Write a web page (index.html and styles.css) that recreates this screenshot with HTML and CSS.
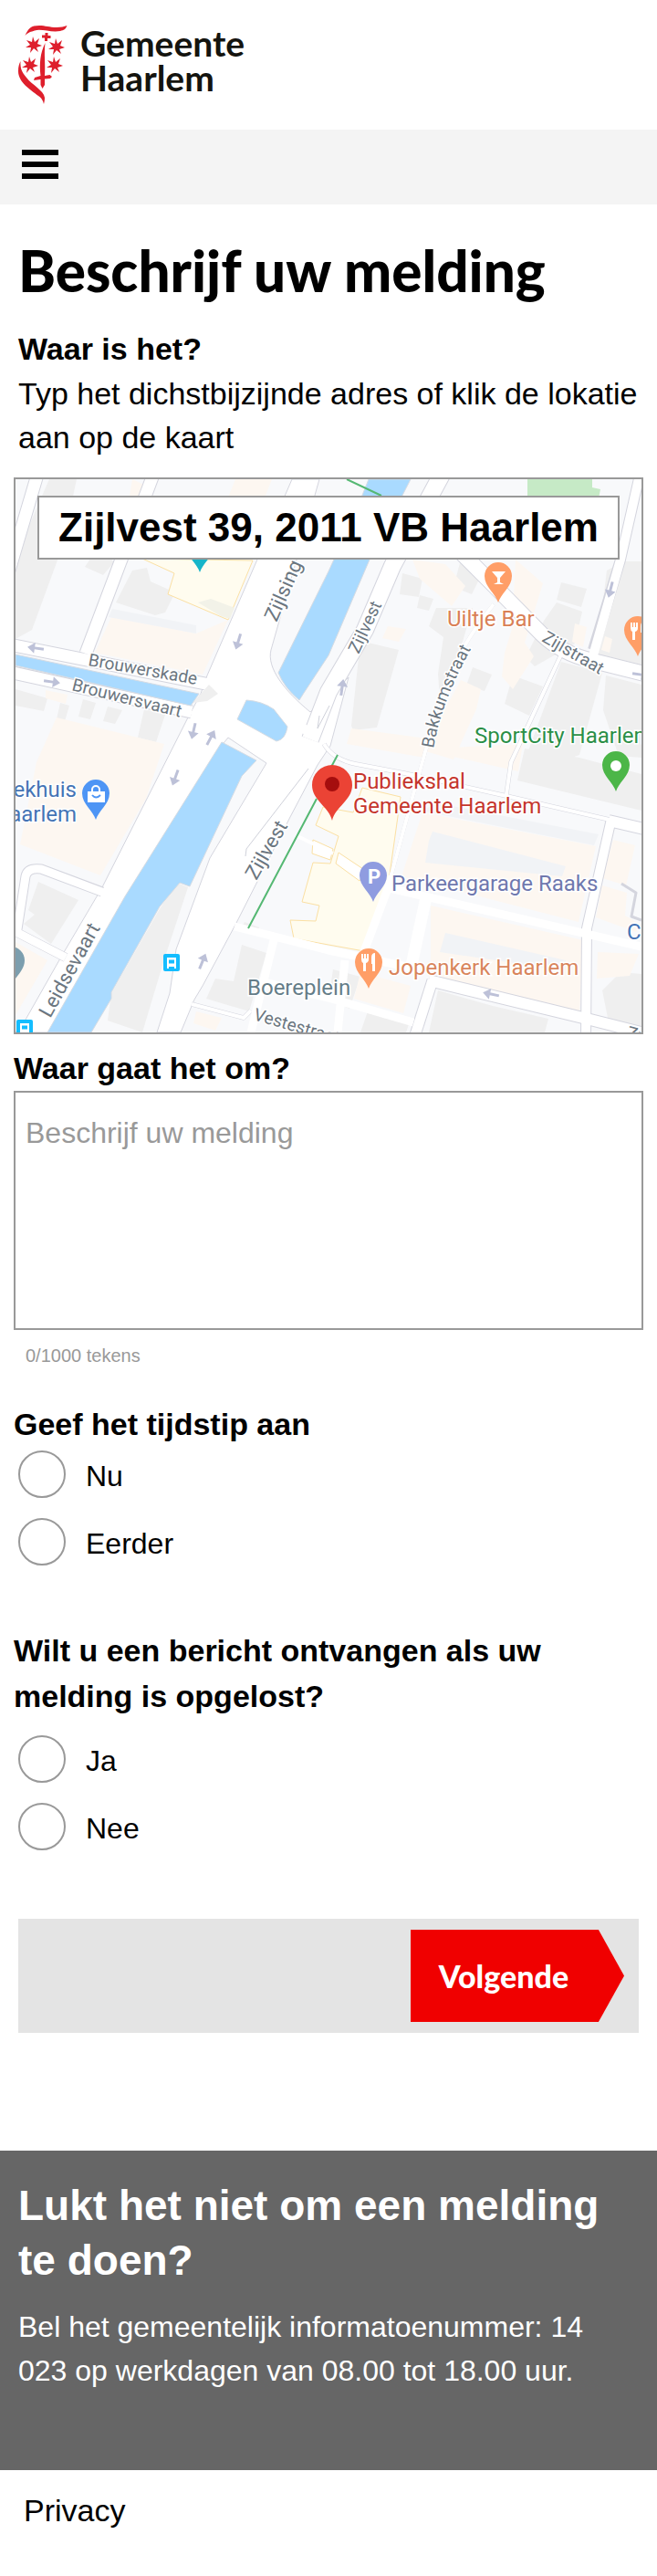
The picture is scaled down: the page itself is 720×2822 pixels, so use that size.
FILE: index.html
```html
<!DOCTYPE html>
<html lang="nl">
<head>
<meta charset="utf-8">
<meta name="viewport" content="width=device-width, initial-scale=1">
<title>Beschrijf uw melding - Gemeente Haarlem</title>
<link rel="stylesheet" href="styles.css">
</head>
<body>
<header class="site-header">
  <a class="logo" href="#">
    <svg class="logo-mark" viewBox="20 28 54 86" aria-hidden="true">
      <defs>
        <path id="star" d="M-1-9 1-3 6-7 4-1 9 1 3 3 5 8 0 4-4 9-3 3-9 3-4 0-8-5-2-3z"/>
      </defs>
      <g fill="#de1f2c">
        <path d="M27.500 39C31 31 34 28 43 28C50 28 54 30 62 30C67 30 70 29 73.500 28C72 32 70 33 66 34C56 36 45 31 38 33.500C34 35 31 35 27.500 39z"/>
        <path d="M22.500 67C22 75 24 79 29 85C35 93 48 99 49 107C49 110 48.500 112 48 114C47 110 46 108 42 105C33 98 20 90 20 78C20 73 21 70 22.500 67z"/>
        <use href="#star" x="37" y="49"/>
        <use href="#star" x="62" y="51"/>
        <use href="#star" x="33" y="71"/>
        <use href="#star" x="60" y="71"/>
        <path d="M49.500 36h3v3h3v3h-3.500v3h-3v-3.500h-3v-3h3.500z"/>
        <path d="M49.500 47C44 58 43 70 44.500 83L38 85 37 88 44.500 87V93L46.500 97 49 93V86.500L55 86 57 84 54.500 82 49 83C50 70 48 60 49.500 47z"/>
      </g>
    </svg>
    <span class="logo-text"><span>Gemeente</span><span>Haarlem</span></span>
  </a>
</header>
<nav class="menu-bar">
  <button class="menu-button" type="button" aria-label="Menu"><span></span><span></span><span></span></button>
</nav>
<main>
  <form class="report">
    <section class="intro">
      <h1>Beschrijf uw melding</h1>
      <h2 class="question"><label for="address">Waar is het?</label></h2>
      <p>Typ het dichstbijzijnde adres of klik de lokatie aan op de kaart</p>
    </section>
    <div class="map">
      <svg class="map-canvas" viewBox="17 525 686 606" role="img" aria-label="Kaart van Haarlem">
        <defs>
          <path id="pin" d="M0 0C-3-10-15-17-15-29A15 15 0 0 1 15-29C15-17 3-10 0 0z"/>
          <path id="arrow" d="M-1.500 9V-1H-6L0-9 6-1H1.500V9z" fill="#bdc1d8"/>
          <g id="fork" fill="#fff"><path d="M-8-9h2v5h1v-5h2v5h1v-5h2v6q0 3-3 4v9h-3v-9q-2-1-2-4z"/><path d="M3-5q0-5 4-5v20h-3v-8h-1z"/></g>
          <g id="bus"><rect x="-9" y="-10" width="18" height="19" rx="2" fill="#14bdff"/><path d="M-5-6h10v12h-2v-2h-6v2h-2z" fill="#fff"/><path d="M-3-3.500h6v4h-6z" fill="#14bdff"/></g>
          <path id="bakkum-line" d="M475 820C481 785 494 750 519 706L535 676"/>
          <g id="streets" fill="none" stroke-linejoin="round">
            <path stroke-width="15" d="M41 520 10 625"/>
            <path stroke-width="15" d="M168 520 94 716"/>
            <path stroke-width="15" d="M10 706 130 730 225 749"/>
            <path stroke-width="15" d="M10 736 210 780"/>
            <path stroke-width="20" d="M484 520 430 620 400 690 360 758 340 810"/>
            <path stroke-width="18" d="M495 595 540 640 593 694 Q615 716 650 724L710 739"/>
            <path stroke-width="12" d="M701 520 680 613 650 712"/>
            <path stroke-width="5" d="M615 717 560 835 555 870"/>
            <path stroke-width="4" d="M541 662 Q485 730 467 820L453 870 427 965"/>
            <path stroke-width="5" d="M355 815 Q365 832 390 837L443 847 555 872 668 898"/>
            <path stroke-width="14" d="M667 899 710 909"/>
            <path stroke-width="12" d="M670 897 643 1017 642 1140"/>
            <path stroke-width="14" d="M470 1074 643 1116 710 1133"/>
            <path stroke-width="13" d="M474 1074 453 1140"/>
            <path stroke-width="10" d="M10 1017 72 1049"/>
            <path stroke-width="11" d="M19 1018 28 960 Q30 950 45 952L112 977"/>
            <path stroke-width="5" d="M210 1100 267 1115 275 1107"/>
            <path stroke-width="3" d="M681 968 697 978 692 1004 703 1008"/>
          </g>
        </defs>
        <rect x="17" y="525" width="686" height="606" fill="#f8f9fb"/>

        <g fill="#efefef">
          <path d="M54 525h30L68 600 35 690 17 700V610z"/>
          <path d="M145 625l16-3 4 15 27 12-11 22-11 3-43-14z"/>
          <path d="M99 612l20-3 6 7-12 14-20-9z"/>
          <path d="M17 755l35 10-4 14-31-6zM66 770l10 3-5 17-9-2zM91 766l14 4-6 18-13-3zM118 774l16 4-8 15-13-3zM158 777l23 6-10 30-20-5z"/>
          <path d="M42 966l44 20-30 48-30-22 12-10-7-5z"/>
          <path d="M206 972l-12-5-18 27-54 94-4 30 38 13 24-80z"/>
          <path d="M441 628l22 6-4 20-21-3zM460 652l15 4-5 13-13-3zM478 666h40l-12 40-24 60-2-28 6-40-16-12z"/>
          <path d="M395 702l42 10-24 85-26 3-2-5z"/>
          <path d="M518 731l21 8-8 18-20-6zM562 740l33 12-15 32-27-13z"/>
          <path d="M505 613l22 18-10 20-20-8zM615 638l28 7-6 20-27-8zM610 660l28 10-8 35-44 25-10-10 20-40z"/>
          <path d="M615 725l45 12-25 90-55 20-9-3zM664 740l39 10v80l-25-2-17-50z"/>
          <path d="M575 820l60 10 68 18v40l-136-33zM665 625l18-10h20v120l-50-12z"/>
          <path d="M265 1035l27 9-19 64-47-14 10-22 20 3z"/>
          <path d="M480 1085l60 17 61 14-4 15H470zM365 1062l30 8-12 35-23-10zM403 1108l45 14-3 9h-50zM660 1085l20-20 23 2v60l-37-12z"/>
          <path d="M268 1010l16 6-2 6-17-6z"/>
        </g>
        <g fill="#fdf7f1">
          <path d="M145 525l21 10-6 12-18-4zM258 525h40l-8 20h-40z"/>
          <path d="M122 676l93 18 35-15-28 60-118-24z"/>
          <path d="M62 786l118 29-20 60-50 84-88-34 18-90z"/>
          <path d="M50 756l24 5-2 10-22-6z"/>
          <path d="M17 1032l35 20-35 60z"/>
          <path d="M452 613l36 5 22 24-15 22-35-30zM565 613l30 26-20 65 10 15-23 36-12-14 3-26 8-26z"/>
          <path d="M505 745l22 10-5 22-25 55-34-10zM385 798l90 12-10 20-85-15zM425 686l20 3-8 14-18-4zM630 683l13 4-4 22-12-6zM663 697l8 3-3 15-9-3z"/>
          <path d="M475 820l98-5-5 30-98-22z"/>
          <path d="M463 890l190 37-19 83-194-50zM472 992l167 38-4 82-163-38z"/>
          <path d="M672 920l24 6-10 44-26-8zM660 970l27 8-2 25 18 10-6 8-44-16zM655 1043l45 2-10 24-36 3zM395 1065l55 15-8 30-54-16z"/>
          <path d="M215 1108l28 7-7 14-24-8z"/>
        </g>
        <g fill="#f1f3f6">
          <path d="M123 667l92 18v9l-96-18zM470 921l4-10 146 38-4 11-150-15zM488 1022l132 30-3 11-135-20zM480 880l176 34-5 12-190-38z"/>
        </g>
        <path d="M578 525h71v9l9 2-2 10h-78z" fill="#c6eac6"/>
        <g fill="#fffcef" stroke="#fbe0a3">
          <path d="M156 612l35 16-7 23 66 28 27-65z"/>
          <path d="M354 884l33 6 10-27 42 10-12 85-28 84-39-7-38-7-4-20 28 1 4-17-19-4 12-43 19 1 9-30-25-12z"/>
          <path d="M371 934l30 20-7 11-26-19zM343 920l22 10-3 12-20-7z" fill="#fff"/>
        </g>
        <path d="M217 660l14-4 26 10-5 12-10-3z" fill="#f2f2e8"/>

        <g fill="#fff" stroke="#d4d5de">
          <path d="M320 525 227 740 220 760 205 788 112 972 66 1050 28 1117 17 1131H55L240 820 250 808 292 836 230 940 193 1040 186 1088 172 1131H198L213 1095 222 1080 258 1013 318 895 348 838 362 817 382 742 340 780C312 757 292 732 297 712L350 525z"/>
        </g>
        <use href="#streets" stroke="#d4d5de"/>
        <g fill="none" stroke="#fff" stroke-linejoin="round">
          <path stroke-width="13" d="M41 520 10 625M168 520 94 716"/>
          <path stroke-width="13" d="M10 706 130 730 235 751M10 736 210 780"/>
          <path stroke-width="18" d="M484 520 430 620 400 690 360 758 340 810"/>
          <path stroke-width="16" d="M495 595 540 640 593 694 Q615 716 650 724L710 739"/>
          <path stroke-width="10" d="M701 520 680 613 650 718"/>
          <path stroke-width="4" d="M615 717 560 835 555 870M541 662 Q485 730 467 820L453 870 427 965M355 815 Q365 832 390 837L443 847 555 872 668 898"/>
          <path stroke-width="12" d="M667 899 710 909M470 1074 643 1116 710 1133"/>
          <path stroke-width="10" d="M670 897 643 1017 642 1140"/>
          <path stroke-width="11" d="M474 1074 453 1140"/>
          <path stroke-width="9" d="M10 1017 72 1049M19 1018 28 960 Q30 950 45 952L114 978"/>
          <path stroke-width="9" d="M427 973 703 1037M430 960 398 1045M257 1015 360 1041 460 1062M300 1030 275 1131M285 1075 360 1093 453 1120M378 1052 370 1131"/>
          <path stroke-width="13" d="M467 983 450 1062"/>
          <path stroke-width="4" d="M210 1100 267 1115 275 1107M324 915 365 935"/>
          <path stroke-width="10" d="M212 785 245 750 345 805"/>
        </g>
        <path d="M338 842l-17 22-51 66-1 8M350 784l-2 14 13-25" fill="none" stroke="#cfd1da"/>
        <path d="M229 750l10 10-12 8-16 2z" fill="#efefef"/>

        <g fill="#a9daff" stroke="#d5dbe3">
          <path d="M404 525H450L405 613 360 718 333 759 328 767Q312 754 305 737L360 626 390 560z"/>
          <path d="M17 717 218 760 209 773 17 729z"/>
          <path d="M270 767Q287 768 300 777L315 796Q313 810 303 812L260 788z"/>
          <path d="M243 813 281 833 265 850 208 971 197 967 175 993 122 1087V1094L100 1131H52L137 982z"/>
        </g>
        <path d="M380 525 418 543M347 875 272 1017M370 827 362 842" fill="none" stroke="#55b873" stroke-width="2"/>

        <g>
          <use href="#arrow" transform="translate(39 710) rotate(-82)"/>
          <use href="#arrow" transform="translate(57 747) rotate(98)"/>
          <use href="#arrow" transform="translate(261 703) rotate(197)"/>
          <use href="#arrow" transform="translate(212 801) rotate(193)"/>
          <use href="#arrow" transform="translate(231 808) rotate(28)"/>
          <use href="#arrow" transform="translate(375 753) rotate(8)"/>
          <use href="#arrow" transform="translate(669 646) rotate(194)"/>
          <use href="#arrow" transform="translate(192 852) rotate(200)"/>
          <use href="#arrow" transform="translate(222 1053) rotate(22)"/>
          <use href="#arrow" transform="translate(538 1089) rotate(-78)"/>
          <use href="#arrow" transform="translate(702 739) rotate(98)"/>
        </g>

        <g class="street-name">
          <text transform="translate(96 729) rotate(10)">Brouwerskade</text>
          <text transform="translate(78 756) rotate(14)">Brouwersvaart</text>
          <text class="street-large" transform="translate(303 682) rotate(-66)">Zijlsing</text>
          <text transform="translate(393 717) rotate(-65)">Zijlvest</text>
          <text><textPath href="#bakkum-line">Bakkumstraat</textPath></text>
          <text transform="translate(593 702) rotate(30)">Zijlstraat</text>
          <text class="street-large" transform="translate(281 965) rotate(-60)">Zijlvest</text>
          <text class="street-large" transform="translate(55 1116) rotate(-61)">Leidsevaart</text>
          <text transform="translate(277 1117) rotate(16)">Vestestraat</text>
          <text transform="translate(686 1137) rotate(14)">Zuid</text>
        </g>
        <g class="place">
          <text x="490" y="686" fill="#d97f55">Uiltje Bar</text>
          <text x="520" y="814" fill="#2b8f47">SportCity Haarlem</text>
          <text x="387" y="864" fill="#c5352c">Publiekshal</text>
          <text x="387" y="891" fill="#c5352c">Gemeente Haarlem</text>
          <text x="429" y="976" fill="#6f78ae">Parkeergarage Raaks</text>
          <text x="426" y="1068" fill="#d9855c">Jopenkerk Haarlem</text>
          <text x="271" y="1090" fill="#657d88">Boereplein</text>
          <text x="84" y="873" fill="#4574b5" text-anchor="end">ekhuis</text>
          <text x="84" y="900" fill="#4574b5" text-anchor="end">aarlem</text>
          <text x="687" y="1029" fill="#4574b5">Co</text>
        </g>

        <use href="#pin" x="219" y="627" fill="#17b5c9"/>
        <use href="#pin" x="546" y="660" fill="#ff9e67"/>
        <path d="M539 626h15l-6 7v5l4 2h-11l4-2v-5z" fill="#fff"/>
        <use href="#pin" x="699" y="719" fill="#ff9e67"/>
        <use href="#fork" x="699" y="691"/>
        <use href="#pin" x="675" y="867" fill="#4cb648"/>
        <circle cx="675" cy="839" r="6" fill="#fff"/>
        <use href="#pin" x="105" y="898" fill="#4e95f5"/>
        <path d="M96 867h19v12H96z" fill="#fff"/>
        <path d="M101 867v-2a4 4 0 0 1 8 0v2" fill="none" stroke="#fff" stroke-width="2"/>
        <path d="M101 871q4 5 9 0" fill="none" stroke="#4e95f5" stroke-width="2"/>
        <path d="M364 899C361 884 342 877 342 860A22 22 0 0 1 386 860C386 877 367 884 364 899z" fill="#eb4335"/>
        <circle cx="364" cy="859" r="8" fill="#a50e0e"/>
        <use href="#pin" x="409" y="988" fill="#8f9ce0"/>
        <text class="pin-letter" x="410" y="968">P</text>
        <use href="#pin" x="404" y="1083" fill="#ff9e67"/>
        <use href="#fork" x="404" y="1054"/>
        <use href="#pin" x="12" y="1081" fill="#7c9eae"/>
        <use href="#bus" x="188" y="1055"/>
        <use href="#bus" x="27" y="1127"/>
      </svg>
      <input class="address" id="address" type="text" value="Zijlvest 39, 2011 VB Haarlem">
    </div>
    <div class="field">
      <label class="question" for="description">Waar gaat het om?</label>
      <textarea id="description" maxlength="1000" placeholder="Beschrijf uw melding"></textarea>
      <p class="counter">0/1000 tekens</p>
    </div>
    <fieldset class="choices time">
      <legend class="question">Geef het tijdstip aan</legend>
      <label class="choice"><input type="radio" name="time"><span>Nu</span></label>
      <label class="choice"><input type="radio" name="time"><span>Eerder</span></label>
    </fieldset>
    <fieldset class="choices notify">
      <legend class="question">Wilt u een bericht ontvangen als uw melding is opgelost?</legend>
      <label class="choice"><input type="radio" name="notify"><span>Ja</span></label>
      <label class="choice"><input type="radio" name="notify"><span>Nee</span></label>
    </fieldset>
    <div class="actions">
      <button class="next" type="submit">Volgende</button>
    </div>
  </form>
</main>
<section class="help">
  <h2>Lukt het niet om een melding te doen?</h2>
  <p>Bel het gemeentelijk informatoenummer: 14 023 op werkdagen van 08.00 tot 18.00 uur.</p>
</section>
<footer class="site-footer"><a href="#">Privacy</a></footer>
</body>
</html>
```

FILE: styles.css
```css
* { box-sizing: border-box; }

body {
  margin: 0;
  background: #fff;
  color: #000;
  font-family: "Liberation Sans", Arial, sans-serif;
  font-size: 34px;
  line-height: 48px;
}

h1, h2, p { margin: 0; }

.site-header { padding: 28px 20px; }

.logo {
  display: flex;
  align-items: flex-start;
  gap: 14px;
  color: #14140f;
  text-decoration: none;
}

.logo-mark { width: 54px; height: 86px; }

.logo-text {
  display: flex;
  flex-direction: column;
  font: 700 39px/38px Lato, sans-serif;
}

.menu-bar {
  display: flex;
  padding: 22px 24px 28px;
  background: #f4f4f4;
}

.menu-button {
  display: flex;
  flex-direction: column;
  gap: 7px;
  width: 40px;
  padding: 0;
  border: 0;
  background: none;
}

.menu-button span { height: 6px; width: 100%; background: #000; }

.report { padding: 36px 15px 0; }

.intro { padding: 0 5px 20px; }

h1 {
  margin-bottom: 25px;
  font: 900 62px/72px Lato, sans-serif;
}

.question {
  padding: 0;
  font-size: 34px;
  font-weight: 700;
  line-height: 50px;
}

.map {
  position: relative;
  border: 2px solid #999;
}

.map-canvas { display: block; width: 100%; height: auto; }

.address {
  position: absolute;
  top: 18px;
  left: 24px;
  right: 24px;
  width: calc(100% - 48px);
  height: 70px;
  padding: 0 16px;
  border: 2px solid #999;
  background: #fff;
  color: #000;
  font: 700 44px/66px "Liberation Sans", Arial, sans-serif;
  text-align: center;
}

.street-name {
  fill: #6b7680;
  stroke: #fff;
  stroke-width: 3px;
  paint-order: stroke;
  font: 400 19px Roboto, sans-serif;
}

.street-large { font-size: 22px; }

.place {
  stroke: #fff;
  stroke-width: 3px;
  paint-order: stroke;
  font: 400 24px Roboto, sans-serif;
}

.pin-letter {
  fill: #fff;
  font: 700 22px Roboto, sans-serif;
  text-anchor: middle;
}

.field { padding-top: 12px; }

.field .question { display: block; }

textarea {
  display: block;
  width: 100%;
  height: 262px;
  padding: 20px 11px;
  border: 2px solid #999;
  background: #fff;
  font: 400 32px/48px "Liberation Sans", Arial, sans-serif;
  resize: none;
}

textarea::placeholder { color: #999; opacity: 1; }

.counter {
  padding: 16px 13px 0;
  color: #999;
  font-size: 20px;
  line-height: 24px;
}

.choices {
  min-width: 0;
  margin: 0;
  padding: 0;
  border: 0;
}

.time { margin-top: 38px; }
.time .question { margin-bottom: 4px; }
.notify { margin-top: 68px; }
.notify .question { margin-bottom: 18px; }

.choice {
  display: flex;
  align-items: center;
  gap: 22px;
  padding-left: 5px;
  font-size: 32px;
}

.choice + .choice { margin-top: 22px; }

.choice span { padding-top: 4px; }

.choice input {
  width: 52px;
  height: 52px;
  margin: 0;
  border: 2px solid #999;
  border-radius: 50%;
  background: #fff;
  appearance: none;
}

.choice input:checked { box-shadow: inset 0 0 0 10px #fff; background: #f00000; }

.actions {
  display: flex;
  justify-content: flex-end;
  margin: 75px 5px 0;
  padding: 12px 16px;
  background: #e4e4e4;
}

.next {
  width: 234px;
  height: 101px;
  padding: 0 58px 0 28px;
  border: 0;
  background: #f00000;
  clip-path: polygon(0 0, 88% 0, 100% 50%, 88% 100%, 0 100%);
  color: #fff;
  font: 900 34px/40px Lato, sans-serif;
}

.help {
  margin-top: 129px;
  padding: 30px 20px 85px;
  background: #666;
  color: #fff;
}

.help h2 {
  margin-bottom: 19px;
  font-size: 46px;
  line-height: 60px;
}

.help p { max-width: 640px; font-size: 32px; }

.site-footer { padding: 20px 26px 47px; }

.site-footer a { color: #000; text-decoration: none; }
```
